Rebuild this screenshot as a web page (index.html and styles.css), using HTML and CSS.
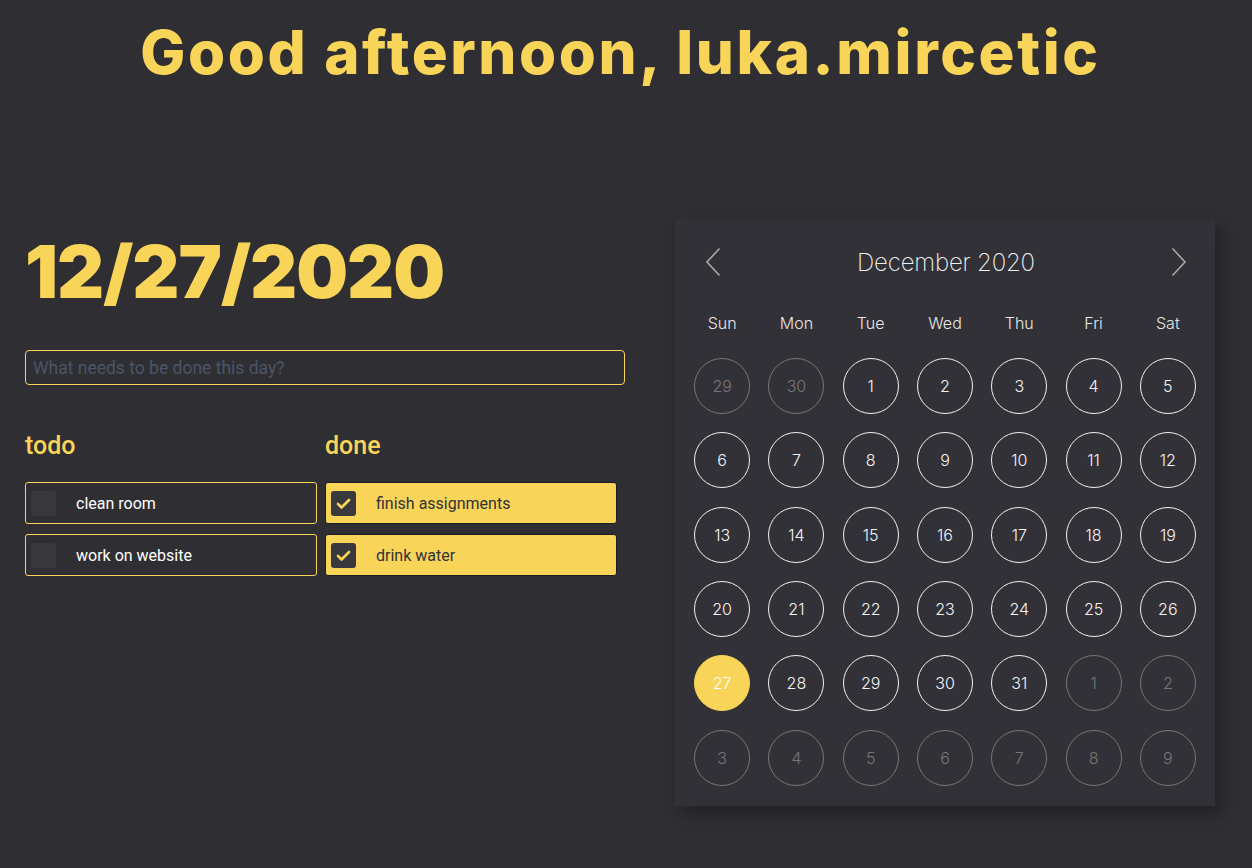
FILE: index.html
```html
<!DOCTYPE html>
<html lang="en">
<head>
<meta charset="utf-8">
<title>Good afternoon</title>
<link rel="stylesheet" href="styles.css">
</head>
<body>
<header class="greeting">
  <h1>Good afternoon, luka.mircetic</h1>
</header>
<main class="main">
  <section class="day">
    <div class="date">12/27/2020</div>
    <input class="new-task" type="text" placeholder="What needs to be done this day?">
    <div class="lists">
      <div class="list">
        <h2>todo</h2>
        <div class="task">
          <span class="box"></span>
          <span class="label">clean room</span>
        </div>
        <div class="task">
          <span class="box"></span>
          <span class="label">work on website</span>
        </div>
      </div>
      <div class="list">
        <h2>done</h2>
        <div class="task task-done">
          <span class="box"><svg viewBox="0 0 24 24" width="19" height="19"><path d="M5 12.5l4.5 4.5L19 7.5" fill="none" stroke="#f8d458" stroke-width="3.4" stroke-linecap="round" stroke-linejoin="round"/></svg></span>
          <span class="label">finish assignments</span>
        </div>
        <div class="task task-done">
          <span class="box"><svg viewBox="0 0 24 24" width="19" height="19"><path d="M5 12.5l4.5 4.5L19 7.5" fill="none" stroke="#f8d458" stroke-width="3.4" stroke-linecap="round" stroke-linejoin="round"/></svg></span>
          <span class="label">drink water</span>
        </div>
      </div>
    </div>
  </section>
  <section class="calendar">
    <div class="cal-head">
      <button class="nav"><svg viewBox="0 0 16 30" width="16" height="30"><path d="M14.5 1.5L2 15l12.5 13.5" fill="none" stroke="#a9a9ad" stroke-width="1.6"/></svg></button>
      <div class="month">December 2020</div>
      <button class="nav"><svg viewBox="0 0 16 30" width="16" height="30"><path d="M1.5 1.5L14 15 1.5 28.5" fill="none" stroke="#a9a9ad" stroke-width="1.6"/></svg></button>
    </div>
    <div class="weekdays">
      <span>Sun</span><span>Mon</span><span>Tue</span><span>Wed</span><span>Thu</span><span>Fri</span><span>Sat</span>
    </div>
    <div class="days">
      <div class="cell"><span class="d other">29</span></div>
      <div class="cell"><span class="d other">30</span></div>
      <div class="cell"><span class="d">1</span></div>
      <div class="cell"><span class="d">2</span></div>
      <div class="cell"><span class="d">3</span></div>
      <div class="cell"><span class="d">4</span></div>
      <div class="cell"><span class="d">5</span></div>
      <div class="cell"><span class="d">6</span></div>
      <div class="cell"><span class="d">7</span></div>
      <div class="cell"><span class="d">8</span></div>
      <div class="cell"><span class="d">9</span></div>
      <div class="cell"><span class="d">10</span></div>
      <div class="cell"><span class="d">11</span></div>
      <div class="cell"><span class="d">12</span></div>
      <div class="cell"><span class="d">13</span></div>
      <div class="cell"><span class="d">14</span></div>
      <div class="cell"><span class="d">15</span></div>
      <div class="cell"><span class="d">16</span></div>
      <div class="cell"><span class="d">17</span></div>
      <div class="cell"><span class="d">18</span></div>
      <div class="cell"><span class="d">19</span></div>
      <div class="cell"><span class="d">20</span></div>
      <div class="cell"><span class="d">21</span></div>
      <div class="cell"><span class="d">22</span></div>
      <div class="cell"><span class="d">23</span></div>
      <div class="cell"><span class="d">24</span></div>
      <div class="cell"><span class="d">25</span></div>
      <div class="cell"><span class="d">26</span></div>
      <div class="cell"><span class="d selected">27</span></div>
      <div class="cell"><span class="d">28</span></div>
      <div class="cell"><span class="d">29</span></div>
      <div class="cell"><span class="d">30</span></div>
      <div class="cell"><span class="d">31</span></div>
      <div class="cell"><span class="d other">1</span></div>
      <div class="cell"><span class="d other">2</span></div>
      <div class="cell"><span class="d other">3</span></div>
      <div class="cell"><span class="d other">4</span></div>
      <div class="cell"><span class="d other">5</span></div>
      <div class="cell"><span class="d other">6</span></div>
      <div class="cell"><span class="d other">7</span></div>
      <div class="cell"><span class="d other">8</span></div>
      <div class="cell"><span class="d other">9</span></div>
    </div>
  </section>
</main>
</body>
</html>
```

FILE: styles.css
```css
html, body {
  margin: 0;
  padding: 0;
  background: #2f2e33;
  height: 100%;
}
body {
  font-family: Roboto, "Liberation Sans", sans-serif;
  color: #fff;
  overflow: hidden;
}
.greeting {
  padding: 17px 11px 0 0;
  text-align: center;
}
.greeting h1 {
  margin: 0;
  font-family: Inter, "Liberation Sans", sans-serif;
  font-weight: 800;
  font-size: 60px;
  line-height: 70px;
  color: #f8d458;
  letter-spacing: 2.6px;
}
.main {
  display: flex;
  align-items: flex-start;
  gap: 50px;
  padding: 0 25px;
  margin-top: 132px;
}
.day {
  width: 600px;
  padding-top: 7px;
}
.date {
  font-family: Inter, "Liberation Sans", sans-serif;
  font-weight: 900;
  font-size: 73px;
  line-height: 92px;
  color: #f8d458;
  letter-spacing: -1px;
}
.new-task {
  display: block;
  box-sizing: border-box;
  width: 600px;
  height: 35px;
  margin-top: 32px;
  padding: 0 7px;
  background: transparent;
  border: 1px solid #f8d458;
  border-radius: 4px;
  font-family: Roboto, sans-serif;
  font-size: 17.5px;
  color: #fff;
  outline: none;
}
.new-task::placeholder {
  color: #4b5568;
}
.lists {
  display: grid;
  grid-template-columns: 292px 292px;
  column-gap: 8px;
  margin-top: 46px;
}
.list h2 {
  margin: 0 0 21px;
  font-family: Roboto, sans-serif;
  font-weight: 500;
  font-size: 25px;
  line-height: 30px;
  color: #f8d458;
}
.task {
  display: flex;
  align-items: center;
  box-sizing: border-box;
  height: 42px;
  margin-bottom: 10px;
  padding: 0 5px;
  border: 1px solid #f8d458;
  border-radius: 3px;
  font-size: 16px;
  color: #fff;
}
.task-done {
  background: #f8d458;
  border-color: #1d1c20;
  color: #333238;
}
.box {
  display: flex;
  align-items: center;
  justify-content: center;
  width: 25px;
  height: 25px;
  border-radius: 3px;
  background: #38383d;
  flex: none;
}
.label {
  margin-left: 20px;
}
.calendar {
  box-sizing: border-box;
  width: 540px;
  margin-top: 0;
  padding: 20px 10px 11px;
  background: #323137;
  box-shadow: 6px 8px 14px rgba(0, 0, 0, 0.28);
}
.cal-head {
  display: flex;
  align-items: center;
  justify-content: space-between;
  height: 46px;
  padding: 0 18px 0 20px;
}
.nav {
  background: none;
  border: 0;
  padding: 0;
  width: 16px;
  height: 30px;
  display: flex;
}
.month {
  font-family: Inter, sans-serif;
  font-weight: 200;
  font-size: 24px;
  color: #f0f0f0;
  letter-spacing: -0.2px;
}
.weekdays {
  display: grid;
  grid-template-columns: repeat(7, 1fr);
  margin-top: 25px;
  height: 26px;
  line-height: 26px;
  text-align: center;
  font-family: Inter, sans-serif;
  font-weight: 300;
  font-size: 16px;
  color: #e8e8e8;
}
.days {
  display: grid;
  grid-template-columns: repeat(7, 1fr);
  grid-auto-rows: 74.3px;
  margin-top: 13px;
}
.cell {
  display: flex;
  align-items: center;
  justify-content: center;
}
.d {
  box-sizing: border-box;
  width: 56px;
  height: 56px;
  border-radius: 50%;
  border: 1px solid #f2f2f2;
  display: flex;
  align-items: center;
  justify-content: center;
  font-family: Inter, sans-serif;
  font-weight: 300;
  font-size: 16px;
  color: #f4f4f4;
}
.d.other {
  border-color: #77767b;
  color: #77767b;
}
.d.selected {
  background: #f8d458;
  border-color: #f8d458;
  color: #fff;
}
```
